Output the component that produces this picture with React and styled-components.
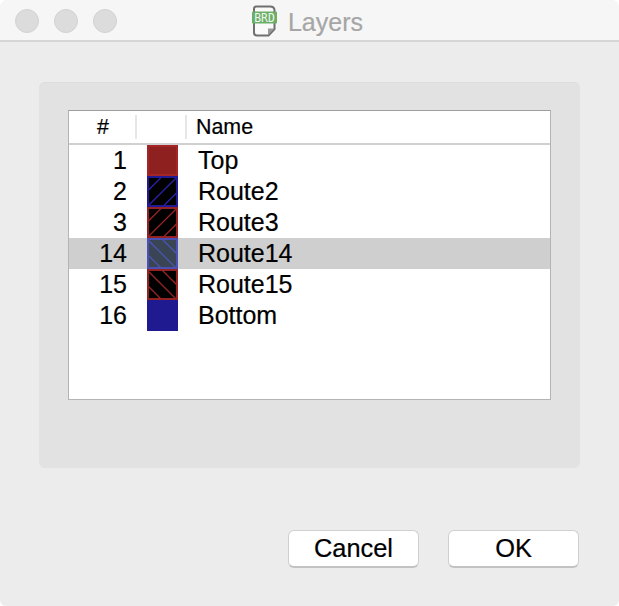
import React from "react";
import styled, { createGlobalStyle } from "styled-components";

const Global = createGlobalStyle`
  html, body { margin: 0; padding: 0; background: #fff; }
  body { font-family: "Liberation Sans", Arial, sans-serif; color: #000; }
`;

const Window = styled.div`
  width: 619px;
  height: 606px;
  box-sizing: border-box;
  background: #ececec;
  border-radius: 8px 8px 6px 6px;
  overflow: hidden;
  display: flex;
  flex-direction: column;
`;

const TitleBar = styled.header`
  height: 42px;
  flex: none;
  box-sizing: border-box;
  background: #f6f6f6;
  border-bottom: 2px solid #d6d6d6;
  display: grid;
  grid-template-columns: 1fr auto 1fr;
  align-items: center;
  padding: 1px 15px 0;
`;

const Lights = styled.div`
  display: flex;
  gap: 15px;
`;

const Light = styled.span`
  width: 24px;
  height: 24px;
  box-sizing: border-box;
  border-radius: 50%;
  background: #dcdcdc;
  border: 1px solid #d2d2d2;
`;

const Title = styled.div`
  display: flex;
  align-items: center;
  gap: 10px;
  font-size: 25px;
  color: #a6a6a6;
  margin-left: -4px;
  padding-top: 1px;
`;

const TitleText = styled.span`
  padding-top: 2px;
  -webkit-text-stroke: 0.2px #a6a6a6;
`;

const Body = styled.main`
  flex: 1;
  display: flex;
  flex-direction: column;
  padding: 40px 39px 0;
`;

const Panel = styled.section`
  height: 386px;
  box-sizing: border-box;
  background: #e2e2e2;
  border-radius: 6px;
  border-top: 1px solid #dcdcdc;
  padding: 27px 29px 0;
`;

const Table = styled.div`
  height: 290px;
  box-sizing: border-box;
  background: #fff;
  border: 1px solid #b4b4b4;
  border-top-color: #9e9e9e;
`;

const columns = "68px 50px 1fr";

const HeaderRow = styled.div`
  display: grid;
  grid-template-columns: ${columns};
  height: 34px;
  box-sizing: border-box;
  border-bottom: 2px solid #d0d0d0;
  align-items: center;
`;

const HeaderCell = styled.div`
  height: 24px;
  line-height: 24px;
  font-size: 21.4px;
  box-sizing: border-box;
  -webkit-text-stroke: 0.2px #000;
  text-align: ${(p) => p.$align || "left"};
  padding-left: ${(p) => p.$left || 0}px;
  padding-right: ${(p) => p.$right || 0}px;
  border-right: ${(p) => (p.$sep ? "2px solid #e6e6e6" : "none")};
`;

const Row = styled.div`
  display: grid;
  grid-template-columns: ${columns};
  height: 31px;
  align-items: center;
  font-size: 25px;
  -webkit-text-stroke: 0.2px #000;
  background: ${(p) => (p.$selected ? "#cfcfcf" : "transparent")};
`;

const NumberCell = styled.div`
  text-align: right;
  padding-right: 10px;
`;

const SwatchCell = styled.div`
  display: flex;
  padding-left: 10px;
  height: 31px;
`;

const NameCell = styled.div`
  padding-left: 11px;
`;

const Footer = styled.footer`
  display: flex;
  justify-content: flex-end;
  gap: 29px;
  margin-top: 62px;
  padding-right: 1px;
`;

const Button = styled.button`
  width: ${(p) => p.$w}px;
  height: 38px;
  box-sizing: border-box;
  background: #fff;
  border: 1px solid #d0d0d0;
  border-bottom: 2px solid #c2c2c2;
  border-radius: 6px;
  font: 25.4px "Liberation Sans", Arial, sans-serif;
  -webkit-text-stroke: 0.2px #000;
  color: #000;
  padding: 0;
`;

function Swatch({ fill, stroke, line, dir, id }) {
  const up = [-15.5, 0, 15.5];
  const down = [-16, -1, 14];
  return (
    <svg width="31" height="31" viewBox="0 0 31 31" aria-hidden="true">
      <defs>
        <clipPath id={id}>
          <rect x="0" y="0" width="31" height="31" />
        </clipPath>
      </defs>
      <rect x="0" y="0" width="31" height="31" fill={fill} />
      {line && (
        <g clipPath={`url(#${id})`} stroke={line} strokeWidth="1.3">
          {dir === "up"
            ? up.map((o) => <line key={o} x1={o} y1="31" x2={o + 31} y2="0" />)
            : down.map((o) => <line key={o} x1={o} y1="0" x2={o + 31} y2="31" />)}
        </g>
      )}
      <rect x="1" y="1" width="29" height="29" fill="none" stroke={stroke} strokeWidth="2" />
    </svg>
  );
}

function BoardIcon() {
  return (
    <svg width="26" height="32" viewBox="0 0 26 32" aria-hidden="true">
      <path
        d="M4 1.5H18C20.5 1.5 22.5 3 22.5 5.5V24L16.5 30.5H5C3 30.5 2 29 2 27.5V4C2 2.5 3 1.5 4 1.5Z"
        fill="#fafafa"
        stroke="#6f6f6f"
        strokeWidth="2"
      />
      <path d="M16 30V23.5H22.5Z" fill="#9a9a9a" />
      <rect x="0" y="6.5" width="25" height="12" rx="1" fill="#6aae68" />
      <text x="12.5" y="16.6" textAnchor="middle" fontSize="11.4" fontFamily="DejaVu Sans Mono, monospace" fill="#eef7ee">
        BRD
      </text>
    </svg>
  );
}

const layers = [
  { n: 1, name: "Top", fill: "#8f2020", stroke: "#a32525" },
  { n: 2, name: "Route2", fill: "#000", stroke: "#221a92", line: "#2a22a8", dir: "up" },
  { n: 3, name: "Route3", fill: "#000", stroke: "#952222", line: "#962424", dir: "up" },
  { n: 14, name: "Route14", fill: "#394454", stroke: "#4a50b4", line: "#4a55b0", dir: "down", selected: true },
  { n: 15, name: "Route15", fill: "#000", stroke: "#952222", line: "#962424", dir: "down" },
  { n: 16, name: "Bottom", fill: "#201a90", stroke: "#201a90" },
];

export default function App() {
  return (
    <>
      <Global />
      <Window>
        <TitleBar>
          <Lights>
            <Light />
            <Light />
            <Light />
          </Lights>
          <Title>
            <BoardIcon />
            <TitleText>Layers</TitleText>
          </Title>
        </TitleBar>
        <Body>
          <Panel>
            <Table>
              <HeaderRow>
                <HeaderCell $align="right" $right={26} $sep>#</HeaderCell>
                <HeaderCell $sep />
                <HeaderCell $left={9}>Name</HeaderCell>
              </HeaderRow>
              {layers.map((l) => (
                <Row key={l.n} $selected={l.selected}>
                  <NumberCell>{l.n}</NumberCell>
                  <SwatchCell>
                    <Swatch id={`sw${l.n}`} fill={l.fill} stroke={l.stroke} line={l.line} dir={l.dir} />
                  </SwatchCell>
                  <NameCell>{l.name}</NameCell>
                </Row>
              ))}
            </Table>
          </Panel>
          <Footer>
            <Button $w={131}>Cancel</Button>
            <Button $w={131}>OK</Button>
          </Footer>
        </Body>
      </Window>
    </>
  );
}
